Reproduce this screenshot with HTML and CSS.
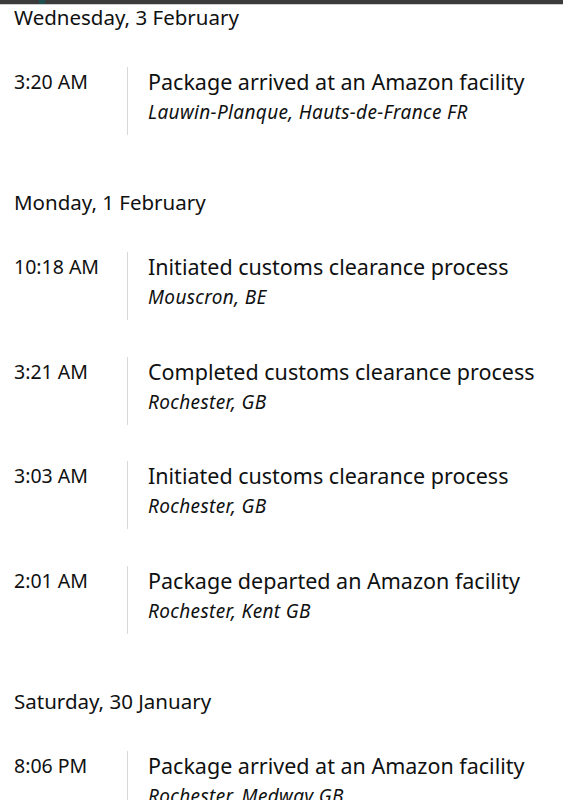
FILE: index.html
```html
<!DOCTYPE html>
<html lang="en">
<head>
<meta charset="utf-8">
<title>Tracking</title>
<link rel="stylesheet" href="styles.css">
</head>
<body>
<div class="topbar"><span class="topbar-mark"></span></div>
<main class="timeline">
  <section class="day">
    <h2 class="day-title">Wednesday, 3 February</h2>
    <div class="event">
      <div class="time">3:20 AM</div>
      <div class="detail">
        <div class="status">Package arrived at an Amazon facility</div>
        <div class="place">Lauwin-Planque, Hauts-de-France FR</div>
      </div>
    </div>
  </section>
  <section class="day">
    <h2 class="day-title">Monday, 1 February</h2>
    <div class="event">
      <div class="time">10:18 AM</div>
      <div class="detail">
        <div class="status">Initiated customs clearance process</div>
        <div class="place">Mouscron, BE</div>
      </div>
    </div>
    <div class="event">
      <div class="time">3:21 AM</div>
      <div class="detail">
        <div class="status">Completed customs clearance process</div>
        <div class="place">Rochester, GB</div>
      </div>
    </div>
    <div class="event">
      <div class="time">3:03 AM</div>
      <div class="detail">
        <div class="status">Initiated customs clearance process</div>
        <div class="place">Rochester, GB</div>
      </div>
    </div>
    <div class="event">
      <div class="time">2:01 AM</div>
      <div class="detail">
        <div class="status">Package departed an Amazon facility</div>
        <div class="place">Rochester, Kent GB</div>
      </div>
    </div>
  </section>
  <section class="day">
    <h2 class="day-title">Saturday, 30 January</h2>
    <div class="event">
      <div class="time">8:06 PM</div>
      <div class="detail">
        <div class="status">Package arrived at an Amazon facility</div>
        <div class="place">Rochester, Medway GB</div>
      </div>
    </div>
  </section>
</main>
</body>
</html>
```
FILE: styles.css
```css
html, body {
  margin: 0;
  padding: 0;
  background: #ffffff;
}
body {
  font-family: "Noto Sans", "Open Sans", sans-serif;
  color: #0f1111;
  overflow: hidden;
  height: 800px;
}
.topbar {
  height: 4px;
  background: #3b3b3b;
  border-bottom: 1px solid #cfcfcf;
  display: flex;
}
.topbar-mark {
  width: 6px;
  margin-left: 39px;
  background: #1f4f4f;
}
.timeline {
  display: flex;
  flex-direction: column;
  gap: 55px;
  padding: 0 0 0 14px;
}
.day {
  display: flex;
  flex-direction: column;
  gap: 36.5px;
}
.day-title {
  margin: 0 0 1.5px 0;
  font-size: 20.5px;
  font-weight: 400;
  line-height: 24px;
}
.event {
  display: flex;
  height: 68px;
}
.time {
  width: 113px;
  flex: none;
  font-size: 19.5px;
  line-height: 30px;
}
.detail {
  border-left: 1px solid #d5d9d9;
  padding-left: 20px;
  white-space: nowrap;
}
.status {
  font-size: 21.5px;
  line-height: 30px;
}
.place {
  font-size: 19px;
  font-style: italic;
  letter-spacing: 0.35px;
  line-height: 26px;
  margin-top: 2px;
}
```
